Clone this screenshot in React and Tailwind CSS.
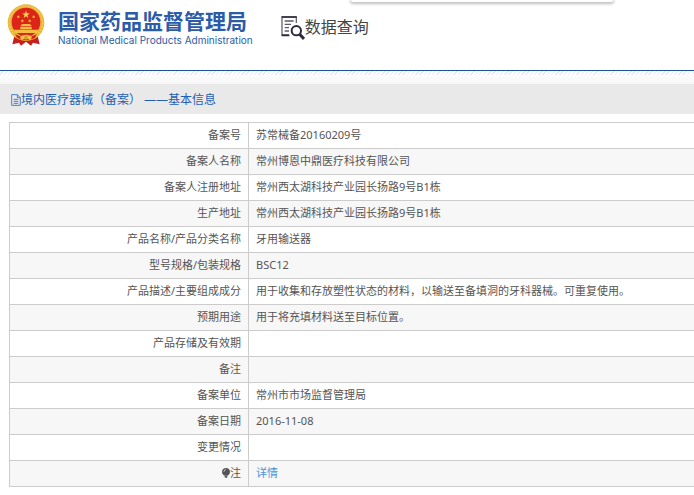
import React from 'react';

const rows = [
  { label: '备案号', value: '苏常械备20160209号' },
  { label: '备案人名称', value: '常州博恩中鼎医疗科技有限公司' },
  { label: '备案人注册地址', value: '常州西太湖科技产业园长扬路9号B1栋' },
  { label: '生产地址', value: '常州西太湖科技产业园长扬路9号B1栋' },
  { label: '产品名称/产品分类名称', value: '牙用输送器' },
  { label: '型号规格/包装规格', value: 'BSC12' },
  { label: '产品描述/主要组成成分', value: '用于收集和存放塑性状态的材料，以输送至备填洞的牙科器械。可重复使用。' },
  { label: '预期用途', value: '用于将充填材料送至目标位置。' },
  { label: '产品存储及有效期', value: '' },
  { label: '备注', value: '' },
  { label: '备案单位', value: '常州市市场监督管理局' },
  { label: '备案日期', value: '2016-11-08' },
  { label: '变更情况', value: '' },
  { label: '注', value: '详情', link: true },
];

function Emblem() {
  return (
    <svg viewBox="0 0 114 126" className="h-[42px] w-[38px] shrink-0" aria-hidden="true">
      <path d="M22 96 L16 121 L36 116 L42 125 L57 113 L72 125 L78 116 L98 121 L92 96 Z" fill="#c81e1e" />
      <circle cx="57" cy="56" r="55" fill="#e9b63a" />
      <circle cx="57" cy="56" r="50" fill="none" stroke="#f3cb55" strokeWidth="4" strokeDasharray="6 4" />
      <circle cx="57" cy="54" r="43" fill="#dc2418" />
      <path d="M57 20 L60 28 L68 28.500 L61.500 33.500 L64 42 L57 37 L50 42 L52.500 33.500 L46 28.500 L54 28 Z" fill="#fbd24c" />
      <g fill="#f5bd42">
        <path d="M34 33 l1.500 3 3 0 -2 2.500 1 4 -3.500 -2 -3.500 2 1 -4 -2 -2.500 3 0 Z" />
        <path d="M80 33 l1.500 3 3 0 -2 2.500 1 4 -3.500 -2 -3.500 2 1 -4 -2 -2.500 3 0 Z" />
        <path d="M46 46 l1.500 3 3 0 -2 2.500 1 4 -3.500 -2 -3.500 2 1 -4 -2 -2.500 3 0 Z" />
        <path d="M68 46 l1.500 3 3 0 -2 2.500 1 4 -3.500 -2 -3.500 2 1 -4 -2 -2.500 3 0 Z" />
        <path d="M40 66 L45 60 H69 L74 66 Z" />
        <path d="M40 68 H74 V76 H40 Z" />
        <path d="M20 77 H94 L90 87 H24 Z" />
      </g>
      <path d="M24 91 Q57 106 90 91 L84 101 Q57 116 30 101 Z" fill="#d3241a" />
      <path d="M39 98 Q57 86 75 98 L71 109 Q57 100 43 109 Z" fill="#f1c246" />
      <circle cx="57" cy="101" r="6" fill="#e0982b" />
    </svg>
  );
}

function SearchDocIcon() {
  return (
    <svg viewBox="0 0 72 72" className="size-6 shrink-0" fill="none" stroke="#2c2b3c" aria-hidden="true">
      <path d="M24 57 H3 V3 H46 V21" stroke="#66666f" strokeWidth="4" />
      <path d="M2 3 H47 M2 58 H25" strokeWidth="5" />
      <path d="M11 15 H38 M11 25 H30 M11 35 H24 M11 45 H24" stroke="#5b5b66" strokeWidth="4" />
      <circle cx="46" cy="44" r="14" strokeWidth="6" />
      <path d="M56 55 L69 69" strokeWidth="9" />
    </svg>
  );
}

function FileIcon() {
  return (
    <svg viewBox="0 0 30 36" className="h-3 w-[10px] shrink-0" fill="none" stroke="#4a7fc2" strokeWidth="3" aria-hidden="true">
      <path d="M2 2 H19 L28 11 V34 H2 Z" />
      <path d="M19 2 V11 H28 M8 16 H22 M8 22 H22 M8 28 H22" />
    </svg>
  );
}

function BulbIcon() {
  return (
    <svg viewBox="0 0 24 30" className="h-[10px] w-2" aria-hidden="true">
      <path d="M12 0 C5 0 0 5 0 11 C0 17 4 21 8 23 H16 C20 21 24 17 24 11 C24 5 19 0 12 0 Z M8 24 H16 V28 L12 30 L8 28 Z" fill="#555" />
      <path d="M6 11 C6 8 8 5 11 5" stroke="#ddd" strokeWidth="3" fill="none" />
    </svg>
  );
}

function App() {
  return (
    <div className="relative overflow-x-hidden bg-white font-['Noto_Sans','Noto_Sans_CJK_SC',sans-serif] text-[#555]">
      {/* Bottom edge of the floating panel */}
      <div className="absolute left-[351px] top-0 h-[2px] w-[262px] rounded-b-sm bg-white shadow-[0_1px_3px_1px_rgba(0,0,0,0.25)]" />

      <header className="flex h-[70px] items-start pl-[7px] pt-1">
        <Emblem />
        <div className="ml-[13px] mt-1 whitespace-nowrap text-[#2c5ba8]">
          <h1 className="font-['Noto_Sans_CJK_SC',sans-serif] text-[21px] font-bold leading-6">国家药品监督管理局</h1>
          <p className="mt-0.5 font-[Inter,sans-serif] text-[10px] leading-3">National Medical Products Administration</p>
        </div>
        <div className="ml-7 mt-3 flex items-start whitespace-nowrap text-[#444]">
          <SearchDocIcon />
          <span className="font-['Noto_Sans_CJK_SC',sans-serif] text-base leading-5">数据查询</span>
        </div>
      </header>

      <div className="h-[14px] border-t border-[#1f5393] bg-linear-to-b from-white to-[#f6f6f6]">
        <div className="h-1 bg-[repeating-linear-gradient(135deg,#ffffff_0px,#ffffff_2px,#e4ebf4_2px,#e4ebf4_3px)]" />
      </div>

      <h2 className="flex h-[30px] items-center whitespace-pre bg-[#e9e9e9] pl-[11px] pt-0.5 text-xs text-[#1f5fb4]">
        <FileIcon />
        境内医疗器械（备案） ——基本信息
      </h2>

      <div className="-mr-2 pb-2 pl-[9px] pt-2">
        <table className="w-full table-fixed border-collapse text-[11px] leading-4">
          <tbody>
            {rows.map((row) => (
              <tr key={row.label} className="h-[26px] even:bg-[#f7f7f7]">
                <th scope="row" className="w-[239px] border border-[#ccc] pb-px pr-[7px] text-right font-normal">
                  <span className="inline-flex items-center">
                    {row.link && <BulbIcon />}
                    {row.label}
                  </span>
                </th>
                <td className="border border-[#ccc] pb-px pl-[7px]">
                  {row.link ? <a href="#detail" className="text-[#4794dc]">{row.value}</a> : row.value}
                </td>
              </tr>
            ))}
          </tbody>
        </table>
      </div>
    </div>
  );
}

export default App;
